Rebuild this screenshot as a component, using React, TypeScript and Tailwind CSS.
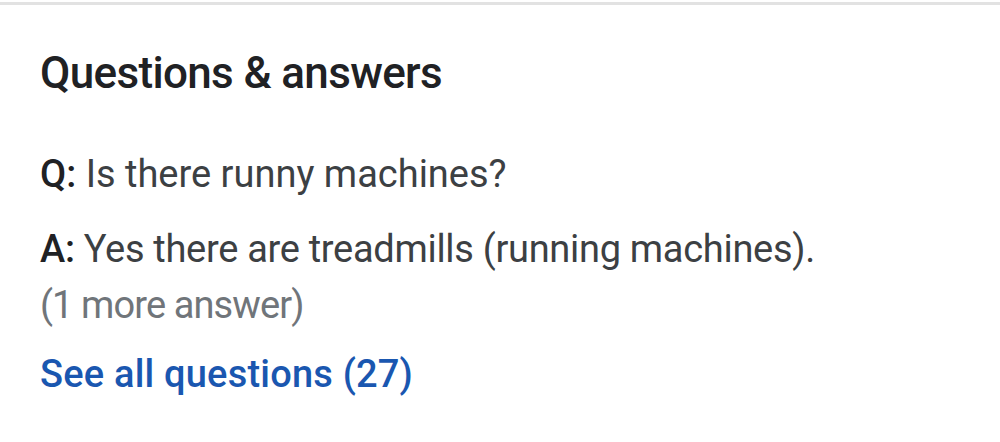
export default function App() {
  return (
    <div className="w-[1000px] h-[442px] bg-white overflow-hidden font-['Roboto',sans-serif]">
      <div className="mt-[2px] h-[3px] bg-[#e2e2e2]" />
      <div className="px-[40px]">
        <h2 className="mt-[38px] text-[44px] leading-[60px] font-medium text-[#202124] tracking-[-0.65px]">
          Questions &amp; answers
        </h2>
        <p className="mt-[45px] text-[38px] leading-[52px] text-[#3c4043]">
          <span className="font-medium text-[#202124]">Q:</span> Is there runny machines?
        </p>
        <p className="mt-[23px] text-[38px] leading-[52px] text-[#3c4043] tracking-[-0.3px]">
          <span className="font-medium text-[#202124]">A:</span> Yes there are treadmills (running machines).
        </p>
        <p className="mt-[4px] text-[38px] leading-[52px] text-[#70757a] tracking-[-0.9px]">(1 more answer)</p>
        <p className="mt-[17px] text-[38px] leading-[52px] font-medium text-[#1a57b0] tracking-[0.2px]">See all questions (27)</p>
      </div>
    </div>
  );
}
